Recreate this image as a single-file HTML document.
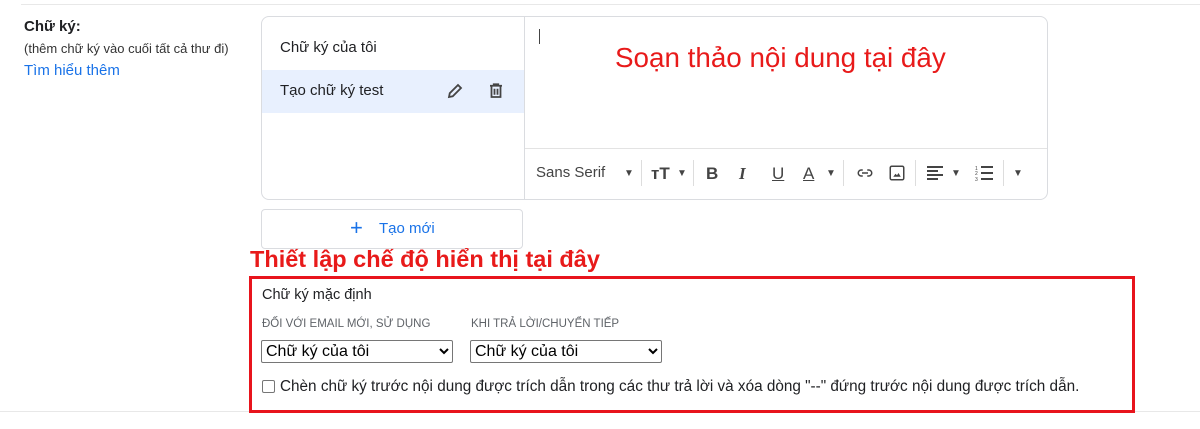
<!DOCTYPE html>
<html><head><meta charset="utf-8"><style>
body{margin:0;width:1200px;height:429px;background:#fff;font-family:"Liberation Sans",Arial,sans-serif;position:relative;overflow:hidden;color:#202124}
.a{position:absolute}
.tb{position:absolute;top:164px;font-size:15px;color:#444}
.sep{position:absolute;top:160px;width:1px;height:26px;background:#ddd}
select{font-family:"Liberation Sans",Arial,sans-serif;font-size:16px;border:1px solid #767676;border-radius:2px;background:#fff;color:#000;height:23px}
</style></head><body>
<div class="a" style="left:21px;top:4px;width:1179px;height:1px;background:#e8e8e8"></div>
<div class="a" style="left:24px;top:18px;font-size:15px;font-weight:bold">Chữ ký:</div>
<div class="a" style="left:24px;top:41px;font-size:13px;color:#333">(thêm chữ ký vào cuối tất cả thư đi)</div>
<div class="a" style="left:24px;top:62px;font-size:15px;color:#1a73e8">Tìm hiểu thêm</div>

<div class="a" style="left:261px;top:16px;width:785px;height:182px;border:1px solid #dadce0;border-radius:8px;overflow:hidden">
  <div class="a" style="left:262px;top:0;width:1px;height:182px;background:#dadce0"></div>
  <div class="a" style="left:18px;top:22px;font-size:15px">Chữ ký của tôi</div>
  <div class="a" style="left:0;top:53px;width:262px;height:43px;background:#e8f0fe"></div>
  <div class="a" style="left:18px;top:65px;font-size:15px">Tạo chữ ký test</div>
  <svg class="a" style="left:184px;top:65px" width="18" height="18" viewBox="0 0 24 24"><path d="M4 20l1-5L16 4l4 4L9 19z" fill="none" stroke="#444" stroke-width="2.4"/></svg>
  <svg class="a" style="left:225px;top:65px" width="18" height="18" viewBox="0 0 24 24"><path d="M4 5h16M9 5V3h6v2M6 5v15h12V5M10 9v8M14 9v8" fill="none" stroke="#444" stroke-width="2.4"/></svg>
  <div class="a" style="left:263px;top:131px;width:522px;height:1px;background:#e3e3e3"></div>
  <div class="a" style="left:277px;top:12px;width:1px;height:15px;background:#444"></div>
</div>
<div class="a" style="left:615px;top:42px;font-size:27.8px;color:#e81a1a">Soạn thảo nội dung tại đây</div>

<div class="tb" style="left:536px">Sans Serif</div>
<div class="tb" style="left:624px;font-size:10px;top:168px">▼</div>
<div class="sep" style="left:641px"></div>
<div class="tb" style="left:651px;font-weight:bold;font-size:17px">тT</div>
<div class="tb" style="left:677px;font-size:10px;top:168px">▼</div>
<div class="sep" style="left:693px"></div>
<div class="tb" style="left:706px;font-weight:bold;font-size:17px">B</div>
<div class="tb" style="left:739px;font-style:italic;font-size:17px;font-family:'Liberation Serif',serif;font-weight:bold">I</div>
<div class="tb" style="left:772px;text-decoration:underline;font-size:17px">U</div>
<div class="tb" style="left:803px;text-decoration:underline;font-size:17px">A</div>
<div class="tb" style="left:826px;font-size:10px;top:168px">▼</div>
<div class="sep" style="left:843px"></div>
<svg class="a" style="left:854px;top:164px" width="22" height="18" viewBox="0 0 24 24"><path d="M9 8H7a4 4 0 000 8h2M15 8h2a4 4 0 010 8h-2M8 12h8" fill="none" stroke="#444" stroke-width="2"/></svg>
<svg class="a" style="left:888px;top:164px" width="18" height="18" viewBox="0 0 24 24"><rect x="3" y="3" width="18" height="18" rx="2" fill="none" stroke="#444" stroke-width="2"/><path d="M7 17l3-4 2 2 2-3 3 5z" fill="#444"/></svg>
<div class="sep" style="left:915px"></div>
<svg class="a" style="left:926px;top:165px" width="18" height="16" viewBox="0 0 18 16"><path d="M1 2h16M1 6h11M1 10h16M1 14h11" stroke="#444" stroke-width="2"/></svg>
<div class="tb" style="left:951px;font-size:10px;top:168px">▼</div>
<svg class="a" style="left:975px;top:165px" width="18" height="16" viewBox="0 0 18 16"><path d="M6 2h12M6 8h12M6 14h12" stroke="#444" stroke-width="2"/><text x="0" y="5" font-size="5" fill="#444">1</text><text x="0" y="10" font-size="5" fill="#444">2</text><text x="0" y="16" font-size="5" fill="#444">3</text></svg>
<div class="sep" style="left:1003px"></div>
<div class="tb" style="left:1013px;font-size:10px;top:168px">▼</div>

<div class="a" style="left:261px;top:209px;width:260px;height:38px;border:1px solid #dadce0;border-radius:4px"></div>
<div class="a" style="left:350px;top:215px;font-size:22px;color:#1a73e8;font-weight:300">+</div>
<div class="a" style="left:379px;top:220px;font-size:15px;color:#1a73e8">Tạo mới</div>

<div class="a" style="left:250px;top:246px;font-size:23.5px;color:#e81a1a;font-weight:bold">Thiết lập chế độ hiển thị tại đây</div>
<div class="a" style="left:0;top:411px;width:1200px;height:1px;background:#e8e8e8"></div>
<div class="a" style="left:249px;top:276px;width:880px;height:131px;border:3px solid #e8141c"></div>
<div class="a" style="left:262px;top:287px;font-size:14.5px">Chữ ký mặc định</div>
<div class="a" style="left:262px;top:318px;font-size:11.5px;color:#5f6368">ĐỐI VỚI EMAIL MỚI, SỬ DỤNG</div>
<div class="a" style="left:471px;top:318px;font-size:11.5px;color:#5f6368">KHI TRẢ LỜI/CHUYỂN TIẾP</div>
<select class="a" style="left:261px;top:340px;width:192px"><option>Chữ ký của tôi</option></select>
<select class="a" style="left:470px;top:340px;width:192px"><option>Chữ ký của tôi</option></select>
<div class="a" style="left:262px;top:380px;width:11px;height:11px;border:1px solid #767676;border-radius:2px"></div>
<div class="a" style="left:280px;top:378px;font-size:15.3px">Chèn chữ ký trước nội dung được trích dẫn trong các thư trả lời và xóa dòng "--" đứng trước nội dung được trích dẫn.</div>
</body></html>
